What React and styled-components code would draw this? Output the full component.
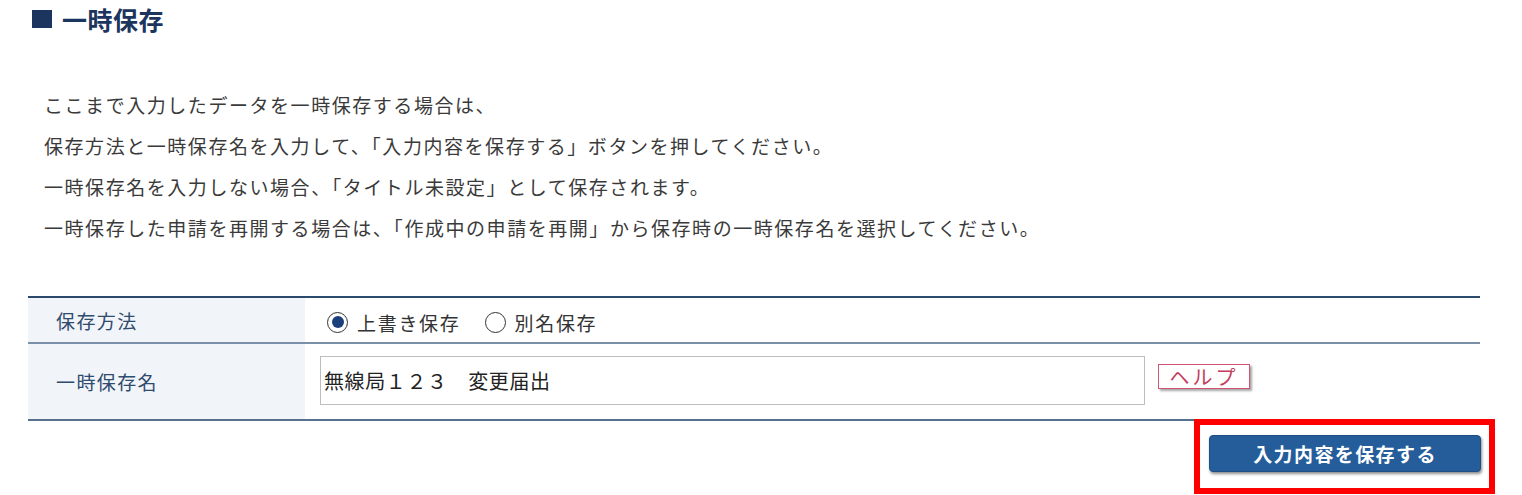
import React from "react";
import styled, { createGlobalStyle } from "styled-components";

const GlobalStyle = createGlobalStyle`
  html, body {
    margin: 0;
    padding: 0;
    background: #ffffff;
  }
  body {
    font-family: "Noto Sans CJK JP", "Noto Sans", sans-serif;
    color: #333333;
  }
`;

const intro = [
  "ここまで入力したデータを一時保存する場合は、",
  "保存方法と一時保存名を入力して、「入力内容を保存する」ボタンを押してください。",
  "一時保存名を入力しない場合、「タイトル未設定」として保存されます。",
  "一時保存した申請を再開する場合は、「作成中の申請を再開」から保存時の一時保存名を選択してください。",
];

export default function App() {
  const [method, setMethod] = React.useState("overwrite");
  const [name, setName] = React.useState("無線局１２３　変更届出");

  return (
    <>
      <GlobalStyle />
      <Page>
        <Heading>
          <HeadingMark />
          一時保存
        </Heading>

        <Intro>
          {intro.map((line) => (
            <p key={line}>{line}</p>
          ))}
        </Intro>

        <FormTable>
          <Row $divider="#7a90a8">
            <LabelCell>保存方法</LabelCell>
            <ValueCell>
              <RadioGroup>
                <RadioLabel>
                  <Radio
                    type="radio"
                    name="method"
                    checked={method === "overwrite"}
                    onChange={() => setMethod("overwrite")}
                  />
                  上書き保存
                </RadioLabel>
                <RadioLabel>
                  <Radio
                    type="radio"
                    name="method"
                    checked={method === "new"}
                    onChange={() => setMethod("new")}
                  />
                  別名保存
                </RadioLabel>
              </RadioGroup>
            </ValueCell>
          </Row>
          <Row $tall $divider="#56708f">
            <LabelCell>一時保存名</LabelCell>
            <ValueCell>
              <NameInput value={name} onChange={(e) => setName(e.target.value)} />
              <HelpButton type="button">ヘルプ</HelpButton>
            </ValueCell>
          </Row>
        </FormTable>

        <ActionRow>
          <Highlight>
            <SaveButton type="button">入力内容を保存する</SaveButton>
          </Highlight>
        </ActionRow>
      </Page>
    </>
  );
}

const Page = styled.div`
  padding: 0 42px 0 28px;
`;

const Heading = styled.h2`
  display: flex;
  align-items: center;
  height: 38px;
  margin: 0;
  padding-left: 4px;
  font-size: 25px;
  font-weight: 700;
  color: #1c355e;
  letter-spacing: 0.5px;
`;

const HeadingMark = styled.span`
  display: inline-block;
  width: 20px;
  height: 18px;
  margin-right: 10px;
  background: #1c355e;
`;

const Intro = styled.div`
  margin-top: 46px;
  padding-left: 16px;
  font-size: 19px;
  letter-spacing: 1.55px;
  line-height: 41px;
  color: #3a3a3a;

  p {
    margin: 0;
  }
`;

const FormTable = styled.div`
  margin-top: 48px;
  border-top: 2px solid #2c4a6e;
`;

const Row = styled.div`
  display: flex;
  height: ${({ $tall }) => ($tall ? "75px" : "44px")};
  border-bottom: 2px solid ${({ $divider }) => $divider};
`;

const LabelCell = styled.div`
  display: flex;
  align-items: center;
  width: 277px;
  flex-shrink: 0;
  padding-left: 28px;
  box-sizing: border-box;
  background: #f1f4f8;
  font-size: 19px;
  letter-spacing: 1.4px;
  color: #2f4b6e;
`;

const ValueCell = styled.div`
  display: flex;
  align-items: center;
  flex: 1;
  padding-left: 15px;
`;

const RadioGroup = styled.div`
  display: flex;
  align-items: center;
  gap: 24px;
  padding-left: 7px;
  padding-top: 4px;
`;

const RadioLabel = styled.label`
  display: flex;
  align-items: center;
  gap: 9px;
  font-size: 19px;
  letter-spacing: 1.7px;
  color: #333333;
  cursor: pointer;
`;

const Radio = styled.input`
  appearance: none;
  width: 21px;
  height: 21px;
  margin: 0;
  border: 1.5px solid #333333;
  border-radius: 50%;
  background: #ffffff;
  display: grid;
  place-content: center;
  cursor: pointer;

  &::before {
    content: "";
    width: 12px;
    height: 12px;
    border-radius: 50%;
    background: #1a3f7a;
    transform: scale(0);
  }

  &:checked::before {
    transform: scale(1);
  }
`;

const NameInput = styled.input`
  width: 825px;
  height: 49px;
  box-sizing: border-box;
  margin: -2px 0 0;
  padding: 0 3px;
  border: 1px solid #bdbdbd;
  font-family: "Noto Sans CJK JP", "Noto Sans", sans-serif;
  font-size: 20px;
  letter-spacing: 0.6px;
  color: #222222;
  outline: none;
`;

const HelpButton = styled.button`
  width: 92px;
  height: 25px;
  margin-left: 13px;
  margin-top: -10px;
  padding: 0;
  border: 1px solid #d05573;
  background: #ffffff;
  box-shadow: 2px 2px 2px rgba(0, 0, 0, 0.35);
  font-family: "Noto Sans CJK JP", "Noto Sans", sans-serif;
  font-size: 20px;
  line-height: 21px;
  letter-spacing: 3px;
  color: #c43f5e;
  cursor: pointer;
`;

const ActionRow = styled.div`
  display: flex;
  justify-content: flex-end;
  margin-top: -2px;
  margin-right: -15px;
`;

const Highlight = styled.div`
  border: 6px solid #ff0000;
  padding: 10px 8px 16px 9px;
  background: #ffffff;
`;

const SaveButton = styled.button`
  display: block;
  width: 272px;
  height: 37px;
  padding: 0;
  border: 1px solid #1d4e84;
  border-radius: 4px;
  background: #245d9a;
  box-shadow: 1px 2px 3px rgba(0, 0, 0, 0.45);
  font-family: "Noto Sans CJK JP", "Noto Sans", sans-serif;
  font-size: 19px;
  font-weight: 700;
  letter-spacing: 1.4px;
  color: #ffffff;
  cursor: pointer;
`;
